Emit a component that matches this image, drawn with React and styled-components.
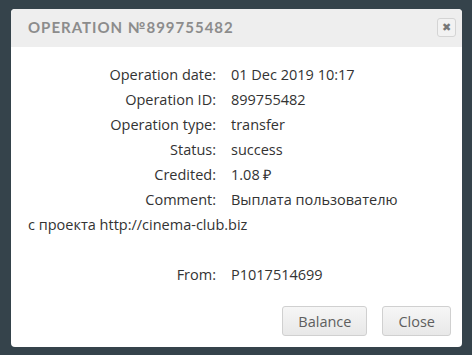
import React from "react";
import styled, { createGlobalStyle } from "styled-components";

const GlobalStyle = createGlobalStyle`
  html, body {
    margin: 0;
    padding: 0;
    background: #35434b;
  }
`;

const rows = [
  { label: "Operation date:", value: "01 Dec 2019 10:17" },
  { label: "Operation ID:", value: "899755482" },
  { label: "Operation type:", value: "transfer" },
  { label: "Status:", value: "success" },
  { label: "Credited:", value: "1.08 ₽" },
];

const App = () => {
  return (
    <>
      <GlobalStyle />
      <Backdrop>
        <Modal>
          <Header>
            <Title>Operation №899755482</Title>
            <CloseX aria-label="close">✖</CloseX>
          </Header>
          <Body>
            {rows.map((r) => (
              <Row key={r.label}>
                <Label>{r.label}</Label>
                <Value>{r.value}</Value>
              </Row>
            ))}
            <Wrapped>
              <Label as="span" $float>
                Comment:
              </Label>
              <Value as="span">
                Выплата пользователю
                <br />с проекта http://cinema-club.biz
              </Value>
            </Wrapped>
            <Row $gap>
              <Label>From:</Label>
              <Value>P1017514699</Value>
            </Row>
          </Body>
          <Footer>
            <Button>Balance</Button>
            <Button>Close</Button>
          </Footer>
        </Modal>
      </Backdrop>
    </>
  );
};

const Backdrop = styled.div`
  width: 472px;
  height: 355px;
  padding: 9px 10px 0 11px;
  box-sizing: border-box;
`;

const Modal = styled.div`
  width: 451px;
  height: 338px;
  background: #fff;
  border-radius: 4px;
  overflow: hidden;
  display: flex;
  flex-direction: column;
`;

const Header = styled.div`
  height: 38px;
  background: #eeeeee;
  display: flex;
  align-items: center;
  justify-content: space-between;
  padding: 0 6px 2px 17px;
  box-sizing: border-box;
`;

const Title = styled.h2`
  margin: 0;
  font-family: "Lato", sans-serif;
  font-size: 15px;
  font-weight: 700;
  letter-spacing: 1px;
  text-transform: uppercase;
  color: #8c8c8c;
`;

const CloseX = styled.button`
  width: 19px;
  height: 19px;
  padding: 0;
  border: 1px solid #d4d4d4;
  border-radius: 3px;
  background: #f2f2f2;
  color: #777;
  font-size: 11px;
  line-height: 17px;
  font-family: "DejaVu Sans", sans-serif;
`;

const Body = styled.div`
  flex: 1;
  padding: 15px 17px 0 17px;
  font-family: "Open Sans", sans-serif;
  font-size: 14.5px;
  color: #333;
`;

const Row = styled.div`
  display: flex;
  height: 25px;
  line-height: 25px;
  margin-top: ${(p) => (p.$gap ? "25px" : "0")};
`;

const Wrapped = styled.div`
  line-height: 25px;
`;

const Label = styled.div`
  width: 188px;
  text-align: right;
  padding-right: 15px;
  float: ${(p) => (p.$float ? "left" : "none")};
`;

const Value = styled.div``;

const Footer = styled.div`
  display: flex;
  justify-content: flex-end;
  gap: 15px;
  padding: 0 11px 11px 0;
`;

const Button = styled.button`
  height: 30px;
  padding: 0 15px;
  font-family: "Open Sans", sans-serif;
  font-size: 14.5px;
  color: #5e5e5e;
  border: 1px solid #d0d0d0;
  border-radius: 3px;
  background: linear-gradient(#f6f6f6, #e8e8e8);
`;

export default App;
